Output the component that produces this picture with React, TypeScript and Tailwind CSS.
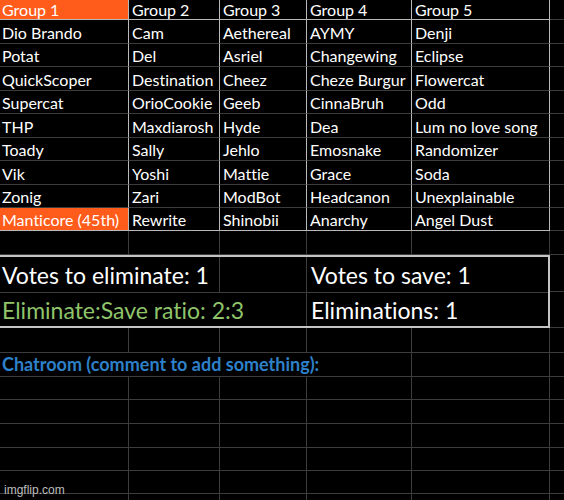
import React from "react";

const rows: string[][] = [
  ["Dio Brando", "Cam", "Aethereal", "AYMY", "Denji"],
  ["Potat", "Del", "Asriel", "Changewing", "Eclipse"],
  ["QuickScoper", "Destination", "Cheez", "Cheze Burgur", "Flowercat"],
  ["Supercat", "OrioCookie", "Geeb", "CinnaBruh", "Odd"],
  ["THP", "Maxdiarosh", "Hyde", "Dea", "Lum no love song"],
  ["Toady", "Sally", "Jehlo", "Emosnake", "Randomizer"],
  ["Vik", "Yoshi", "Mattie", "Grace", "Soda"],
  ["Zonig", "Zari", "ModBot", "Headcanon", "Unexplainable"],
  ["Manticore (45th)", "Rewrite", "Shinobii", "Anarchy", "Angel Dust"],
];

const rowHeights = [
  "h-[24px]",
  "h-[23px]",
  "h-[24px]",
  "h-[23px]",
  "h-[24px]",
  "h-[23px]",
  "h-[24px]",
  "h-[23px]",
  "h-[23px]",
];

const colW = ["w-[129px]", "w-[91px]", "w-[87px]", "w-[105px]", "w-[138px]"];

function TableRow({
  cells,
  h,
  header,
  lastRow,
  orangeFirst,
}: {
  cells: string[];
  h: string;
  header?: boolean;
  lastRow?: boolean;
  orangeFirst?: boolean;
}) {
  const bottom = header || lastRow ? "border-b-[#b9b9b9]" : "border-b-[#3c3c3c]";
  return (
    <div className={`flex ${h}`}>
      {cells.map((c, i) => (
        <div
          key={i}
          className={`${colW[i]} shrink-0 flex items-end border-r border-b border-r-[#b9b9b9] ${bottom} ${
            i === 0 ? "pl-[2px]" : "pl-[3px]"
          } ${header ? "pb-0" : "pb-[1px]"} ${i === 0 && orangeFirst ? "bg-[#ff5b1a]" : ""}`}
        >
          <span className="whitespace-nowrap text-[16px] leading-[18px] text-white">{c}</span>
        </div>
      ))}
      <div className="flex-1 border-b border-b-[#3c3c3c]" />
    </div>
  );
}

function EmptyRow({ h }: { h: string }) {
  return (
    <div className={`flex ${h}`}>
      {colW.map((w, i) => (
        <div key={i} className={`${w} shrink-0 border-r border-b border-[#3c3c3c]`} />
      ))}
      <div className="flex-1 border-b border-[#3c3c3c]" />
    </div>
  );
}

export default function App() {
  return (
    <div className="relative w-[564px] h-[500px] overflow-hidden bg-black font-['Lato',sans-serif] [font-variant-ligatures:none]">
      <TableRow cells={["Group 1", "Group 2", "Group 3", "Group 4", "Group 5"]} h="h-[20px]" header orangeFirst />
      {rows.map((r, i) => (
        <TableRow
          key={i}
          cells={r}
          h={rowHeights[i]}
          lastRow={i === rows.length - 1}
          orangeFirst={i === rows.length - 1}
        />
      ))}
      <EmptyRow h="h-[24px]" />

      {/* stats box */}
      <div className="flex h-[73px]">
        <div className="w-[550px] shrink-0 border-t-2 border-b-2 border-r-2 border-[#c4c4c4] flex flex-col">
          <div className="flex h-[36px] border-b border-[#3c3c3c]">
            <div className="w-[220px] shrink-0 border-r border-[#3c3c3c] flex items-end pl-[2px] pb-[3px]">
              <span className="whitespace-nowrap text-[23px] leading-[28px] text-white">Votes to eliminate: 1</span>
            </div>
            <div className="w-[87px] shrink-0 border-r border-[#3c3c3c]" />
            <div className="flex-1 flex items-end pl-[4px] pb-[3px]">
              <span className="whitespace-nowrap text-[23px] leading-[28px] text-white">Votes to save: 1</span>
            </div>
          </div>
          <div className="flex flex-1">
            <div className="w-[307px] shrink-0 border-r border-[#3c3c3c] flex items-end pl-[2px] pb-[2px]">
              <span className="whitespace-nowrap text-[23px] leading-[28px] text-[#8fc46a]">
                Eliminate:Save ratio: 2:3
              </span>
            </div>
            <div className="flex-1 flex items-end pl-[4px] pb-[2px]">
              <span className="whitespace-nowrap text-[23px] leading-[28px] text-white">Eliminations: 1</span>
            </div>
          </div>
        </div>
        <div className="flex-1 flex flex-col">
          <div className="h-[37px] border-b border-[#3c3c3c]" />
          <div className="flex-1 border-b border-[#3c3c3c]" />
        </div>
      </div>

      <EmptyRow h="h-[25px]" />

      {/* chatroom row */}
      <div className="flex h-[24px]">
        <div className="w-[412px] shrink-0 border-r border-b border-[#3c3c3c] flex items-end pl-[2px] pb-[1px]">
          <span className="whitespace-nowrap text-[18px] leading-[21px] font-bold text-[#2e80c9]">
            Chatroom (comment to add something):
          </span>
        </div>
        <div className="w-[138px] shrink-0 border-r border-b border-[#3c3c3c]" />
        <div className="flex-1 border-b border-[#3c3c3c]" />
      </div>

      <EmptyRow h="h-[23px]" />
      <EmptyRow h="h-[24px]" />
      <EmptyRow h="h-[24px]" />
      <EmptyRow h="h-[23px]" />
      <EmptyRow h="h-[23px]" />
      <EmptyRow h="h-[24px]" />

      <div className="absolute left-[4px] bottom-[3px] text-[12px] leading-[14px] font-['Liberation_Sans',Arial,sans-serif] text-[#bdbdbd]">
        imgflip.com
      </div>
    </div>
  );
}
